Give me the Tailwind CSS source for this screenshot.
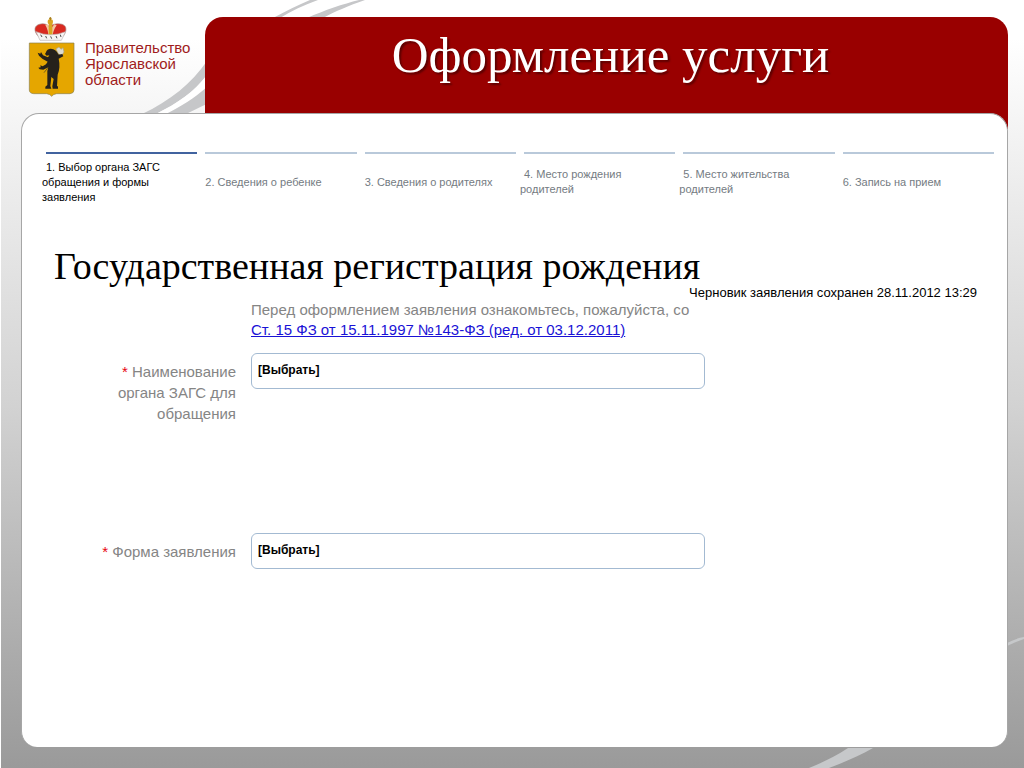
<!DOCTYPE html>
<html lang="ru">
<head>
  <meta charset="UTF-8" />
  <meta name="viewport" content="width=device-width, initial-scale=1.0"/>
  <title>Оформление услуги</title>
  <script src="https://cdn.jsdelivr.net/npm/@tailwindcss/browser@4"></script>
</head>
<body class="relative flex min-h-screen flex-col overflow-x-hidden border-l border-white bg-linear-to-b from-white from-5% via-[#d2d2d2] via-53% to-[#9a9a9a] font-['Liberation_Sans',Arial,sans-serif]">
  <!-- Background swooshes -->
  <svg class="absolute top-0 left-0 h-[114px] w-[400px]" viewBox="0 0 400 114" fill="#c6c7c9" aria-hidden="true">
    <path d="M141 114C169 101 191 83 206 61V75C193 92 177 103 155 114Z"/>
    <path d="M155 114C177 103 193 92 206 75V87C192 99 181 106 165 114Z" fill="#fff"/>
    <path d="M165 114C181 106 192 99 206 87V104C199 107 193 110 185 114Z"/>
    <path d="M272 18C285 11 297 5 309 0H317C303 5 290 11 279 18Z"/>
    <path d="M306 18C324 10 342 4 358 0H364C347 6 335 11 322 18Z"/>
  </svg>
  <svg class="absolute right-0 bottom-0 h-[140px] w-[224px]" viewBox="0 0 224 140" fill="#c6c8ca" aria-hidden="true">
    <path d="M9 140C24 134 36 128 48 120H73C59 128 45 134 29 140Z"/>
    <path d="M207 15C213 12 218 10 224 9V11C218 13 213 15 207 18Z"/>
  </svg>

  <header class="relative flex pt-[17px] pr-4">
    <a href="#" class="-mt-[7px] flex w-[204px] shrink-0 pl-[19px] text-[15px] leading-4 text-[#a01c1c]">
      <!-- Coat of arms -->
      <svg class="h-[95px] w-[65px] shrink-0" viewBox="0 0 195 285" aria-hidden="true">
        <path d="M54 78C40 62 43 47 58 43C70 39 80 42 88 50C97 42 113 39 127 43C142 49 140 64 130 78L121 84H62Z" fill="#d92a20" stroke="#a58c86" stroke-width="2"/>
        <path d="M82 43Q95 58 92 84H85Q87 64 76 45ZM103 43Q88 58 92 84H97Q98 62 110 46Z" fill="#f2c6a0"/>
        <path d="M86 39H97V84H86Z" fill="#d9a520"/>
        <circle cx="91" cy="35" r="8" fill="#d9a520"/>
        <path d="M91 21V31M87 25H95" stroke="#a77b16" stroke-width="3"/>
        <path d="M48 65Q91 84 137 65L124 91H60Z" fill="#f7f5f4" stroke="#bdb5b3" stroke-width="2"/>
        <path d="M62 74L66 81M77 78L80 85M92 79L95 86M108 78L111 85M121 74L123 81" stroke="#4c4c4c" stroke-width="3"/>
        <path d="M28 99H162V240Q162 250 150 251H110Q100 252 95 259Q90 252 80 251H41Q28 250 28 240Z" fill="#e5a600" stroke="#8a8150" stroke-width="2"/>
        <path d="M72 188L121 126" stroke="#77601f" stroke-width="3"/>
        <path d="M108 117L117 111L123 118L129 113L132 126L124 138L114 130Z" fill="#dedbd0" stroke="#aaa486" stroke-width="2"/>
        <path d="M78 127C79 119 90 113 100 118C108 121 113 127 115 134L127 132L130 139L116 146C120 163 119 180 113 194L111 229H114V236H98L97 229L101 207L94 201L91 228L94 236H76V230L82 225L82 183L85 172L70 179L59 178L55 173L62 172L61 166L68 169L78 163L83 155L68 147L57 137L53 128L61 131L63 126L69 136L84 142L88 136L80 137L75 132Z" fill="#25211b"/>
      </svg>
      <span class="mt-[30px]">Правительство<br>Ярославской<br>области</span>
    </a>
    <div class="-mb-4 h-28 flex-1 rounded-t-[18px] bg-[#990000] text-center">
      <h1 class="pt-2 pl-2 font-['Liberation_Serif','Times_New_Roman',serif] text-[51px] leading-[60px] text-white text-shadow-[2px_2px_2px_rgb(0_0_0/0.4)]">Оформление услуги</h1>
    </div>
  </header>

  <main class="relative mx-4 mb-[21px] ml-5 flex-1 rounded-t-[18px] rounded-b-[16px] border border-b-0 border-[#a6a6a6] bg-white pt-[38px]">
    <!-- Steps -->
    <ol class="mr-[13px] ml-6 grid grid-cols-6 gap-x-2 text-[11px] leading-[15px] text-[#747b82]">
      <li class="flex h-[58px] items-center border-t-2 border-[#41639f] text-black" aria-current="step"><span class="-ml-1 w-[136px] indent-1">1. Выбор органа ЗАГС обращения и формы заявления</span></li>
      <li class="flex items-center border-t-2 border-[#b9c9da]"><span class="-ml-1 indent-1">2. Сведения о ребенке</span></li>
      <li class="flex items-center border-t-2 border-[#b9c9da]"><span class="-ml-1 indent-1">3. Сведения о родителях</span></li>
      <li class="flex items-center border-t-2 border-[#b9c9da]"><span class="-ml-1 w-[136px] indent-1">4. Место рождения родителей</span></li>
      <li class="flex items-center border-t-2 border-[#b9c9da]"><span class="-ml-1 w-[136px] indent-1">5. Место жительства родителей</span></li>
      <li class="flex items-center border-t-2 border-[#b9c9da]"><span class="-ml-1 indent-1">6. Запись на прием</span></li>
    </ol>

    <h2 class="mt-9 pl-8 font-[Georgia,'Liberation_Serif',serif] text-[38px] leading-10 text-black">Государственная регистрация рождения</h2>
    <p class="pr-[30px] text-right text-[13px] leading-[14px] text-black">Черновик заявления сохранен 28.11.2012 13:29</p>

    <form class="grid grid-cols-[144px_minmax(0,454px)] gap-x-[15px] pl-[70px] text-[15px] leading-[21px] text-[#858585]">
      <p class="col-start-2 mb-[13px] whitespace-nowrap leading-5">Перед оформлением заявления ознакомьтесь, пожалуйста, со<br><a href="#" class="text-[#1a12d6] underline">Ст. 15 ФЗ от 15.11.1997 №143-ФЗ (ред. от 03.12.2011)</a></p>

      <label for="organ" class="mb-[109px] pt-2 text-right"><span class="text-red-600">*</span> Наименование органа ЗАГС для обращения</label>
      <select id="organ" class="h-9 appearance-none rounded-md border border-[#a3bad2] bg-white px-[6px] pb-px text-[12px] font-bold text-black">
        <option>[Выбрать]</option>
      </select>

      <label for="form-type" class="pt-2 text-right"><span class="text-red-600">*</span> Форма заявления</label>
      <select id="form-type" class="h-9 appearance-none rounded-md border border-[#a3bad2] bg-white px-[6px] pb-px text-[12px] font-bold text-black">
        <option>[Выбрать]</option>
      </select>
    </form>
  </main>
</body>
</html>
